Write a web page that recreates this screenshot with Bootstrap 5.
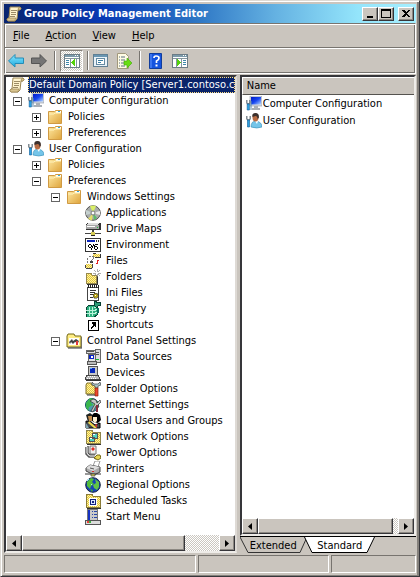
<!DOCTYPE html>
<html lang="en">
<head>
<meta charset="utf-8">
<meta name="viewport" content="width=device-width, initial-scale=1">
<title>Group Policy Management Editor</title>
<link href="https://cdn.jsdelivr.net/npm/bootstrap@5.3.0/dist/css/bootstrap.min.css" rel="stylesheet">
<style>
:root{--face:#cac5be;--dark:#77746f;--ink:#36363a}
body{font:11px/16px Tahoma,"DejaVu Sans Condensed","Noto Sans",sans-serif;color:#000;background:var(--face)}
button{font:inherit;color:inherit;background:none;border:0;padding:0}
.window{min-height:100vh;padding:1px 2px 1px 1px;border:1px solid;border-color:#dedad4 var(--ink) var(--ink) #dedad4;box-shadow:inset 1px 1px #fff,inset -2px -1px #85817c}
.window-inner{padding:2px 1px 2px 2px}
.titlebar{height:19px;padding:0 2px 0 2px;background:linear-gradient(90deg,#08246f 0,#0739b4 24%,#2e77c5 47%,#65b2e2 66%,#94e5fb 86%,#a5efff 100%)}
.titlebar h1{font:bold 11px/18px Tahoma,"DejaVu Sans Condensed","Noto Sans",sans-serif;color:#fff;margin:0 0 0 2px}
.raised{background:var(--face);border:1px solid;border-color:#fff var(--ink) var(--ink) #fff;box-shadow:inset -1px -1px #8c8882}
.caption-btn{width:16px;height:14px}
.caption-btn svg,.arrow-btn svg{display:block;margin:auto}
.bars{border:1px solid;border-color:var(--dark) #fff #fff var(--dark);box-shadow:inset 1px 1px #fff,inset -1px -1px var(--dark)}
.menu-row{height:24px;padding-left:8px;border-bottom:1px solid var(--dark)}
.menu-row button{line-height:22px}
.tool-row{height:25px;padding:1px 3px 2px 3px;border-top:1px solid #fff}
.tool{width:23px;height:22px}
.dither{background:repeating-conic-gradient(#fff 0 25%,#cbc7c0 0 50%) 0 0/2px 2px}
.tool.pressed{border:1px solid;border-color:#85817b #fff #fff #85817b}
.divider{width:2px;height:19px;border-left:1px solid var(--dark);border-right:1px solid #fff}
.icon{width:16px;height:16px;flex:none;display:block}
.panes{gap:3px;margin-top:1px}
.pane{background:#fff;border:2px solid;border-color:var(--ink) #eeece8 #eeece8 var(--ink)}
.pane-left{flex:231 1 0;min-width:0;border-right-color:#dedad5}
.pane-right{flex:178 1 0;min-width:0}
.tree ul,.tree{list-style:none;margin:0;padding:0}
.tree ul ul{padding-left:19px}
.node{display:flex;align-items:center;height:16px;white-space:nowrap;padding-left:7px}
.node .icon{margin-left:6px;margin-right:5px}
.leaf{padding-left:16px}
.root{padding-left:3px}
.root .icon{margin:0 3px 0 0}
.root .name{flex:1;min-width:0;overflow:hidden;background:#0a246a;color:#fff;outline:1px dotted #ffdf83;outline-offset:-1px;padding-left:1px}
.toggle{width:9px;height:9px;border:1px solid #666;background:linear-gradient(#000,#000) center/5px 1px no-repeat #fff;flex:none}
.toggle.plus{background:linear-gradient(#000,#000) center/5px 1px no-repeat,linear-gradient(#000,#000) center/1px 5px no-repeat,#fff}
.scroll{height:16px}
.arrow-btn{width:16px;flex:none}
.thumb{flex:160 1 0}.left-rest{flex:33 1 0}
.right-thumb{flex:136 1 0}.right-rest{flex:5 1 0}
.items{width:100%;border-collapse:separate;border-spacing:0}
.items th{height:18px;font-weight:400;background:var(--face);border:solid;border-width:1px 0 1px 1px;border-color:#fff #fff #55534f #fff;padding:0 0 0 4px}
.items td{height:17px;padding:0 0 0 4px}
.items .icon{margin-right:1px}
.tabs{height:17px;border-top:1px solid #000}
.tabs button{position:relative;height:16px;line-height:15px;width:67px}
.tabs button+button{width:72px;margin-left:-3px}
.tabs svg{position:absolute;inset:0;width:100%;height:100%}
.tabs span{position:relative}
.status{height:18px;margin-top:2px}
.status div{border:1px solid;border-color:var(--dark) #fff #fff var(--dark)}
.status{gap:2px}
.s1{flex:193 1 0}.s2{flex:131 1 0}.s3{flex:84 1 0}
</style>
<script src="https://cdn.jsdelivr.net/npm/bootstrap@5.3.0/dist/js/bootstrap.bundle.min.js"></script>
</head>
<body>
<svg width="0" height="0" class="position-absolute" aria-hidden="true">
<defs>
<linearGradient id="gold" x2="1" y2="1"><stop stop-color="#ffe9a2"/><stop offset="1" stop-color="#dea43c"/></linearGradient>
<linearGradient id="screen" x2="1" y2="1"><stop stop-color="#0018c8"/><stop offset=".5" stop-color="#1746f0"/><stop offset="1" stop-color="#b5d8ff"/></linearGradient>
<linearGradient id="cyan" x2="0" y2="1"><stop stop-color="#8be7ff"/><stop offset="1" stop-color="#1ba9df"/></linearGradient>
<pattern id="yd" width="2" height="2" patternUnits="userSpaceOnUse"><path fill="#fff3a0" d="M0 0h2v2H0z"/><path fill="#e2c43a" d="M0 0h1v1H0zM1 1h1v1H1z"/></pattern>
</defs>
<symbol id="scroll" viewBox="0 0 16 16"><path d="M4 1h10q2 1 0 3h-2l-1 9-2 2H2q-2-1 0-3h1z" fill="#fff3cc" stroke="#9b8654"/><path d="M5 4.500h6M5 6.500h5M5 8.500h5M4 10.500h5" stroke="#9c8b66"/><path d="M12 4q0-3 2-3 2 2 0 3zM2 12h8q-1 2-1 3H2q-2-1 0-3z" fill="#d9c590" stroke="#8d7745" stroke-width=".6"/></symbol>
<symbol id="computer" viewBox="0 0 16 16"><path d="M4 0h12v10H4z" fill="#d6dbe2" stroke="#8e99a5" stroke-width=".6"/><path d="M5 1h10v7.500H5z" fill="url(#screen)"/><path d="M8 10h4v2h2v2H6v-2h2z" fill="#a9afb6"/><path d="M.8 4v3l1.400 1.500L3.800 7V4" fill="none" stroke="#707b86" stroke-width="1.300"/><path d="M1.200 8h2.200v6H1.200z" fill="#2ca6e5" stroke="#0e5b9c" stroke-width=".6"/><path d="M4.500 5h1v9h-1z" fill="#5d8aac"/></symbol>
<symbol id="user" viewBox="0 0 16 16"><path d="M5 14q0-6 5-6 6 1 6 6-5 2-11 0z" fill="#75c5e9" stroke="#318bb6" stroke-width=".6"/><path d="M9 8l2 3 1-3z" fill="#fff"/><ellipse cx="9.500" cy="4.500" rx="3" ry="4" fill="#b86b43"/><path d="M6.500 4q-1-4 3-4 4 0 3.300 5l-1.300 1q0-3-2-3z" fill="#3b302d"/><path d="M.8 3v3L2.500 7.500 4.200 6V3" fill="none" stroke="#6f7981" stroke-width="1.300"/><path d="M1.500 7h2v7h-2z" fill="#2b9fe0" stroke="#0b5c99" stroke-width=".6"/></symbol>
<symbol id="folder" viewBox="0 0 16 16"><path d="M1.500 2.500h6l1-1h6v13h-13z" fill="url(#gold)" stroke="#d09a43"/><path d="M9 2h5v2H9z" fill="#fff"/><path d="M11 2h2v1h-2z" fill="#36a8d8"/><path d="M2 5h5l1-1h6" stroke="#fff2b9" fill="none"/></symbol>
<symbol id="cd" viewBox="0 0 16 16"><circle cx="8" cy="8" r="7.300" fill="#a9adaa" stroke="#555"/><path d="M8 8L5 1q3-1 6 0z" fill="#d9ef65"/><path d="M8 8l-5 6 4 1.500z" fill="#e4df67"/><path d="M8 8l7-2v4z" fill="#e8e8e8"/><path d="M8 8l1 7 3-2z" fill="#5abc69"/><path d="M8 8L1 5v5z" fill="#c4d0cf"/><circle cx="8" cy="8" r="2" fill="#fff" stroke="#777"/></symbol>
<symbol id="drive" viewBox="0 0 16 16" shape-rendering="crispEdges"><path d="M2 2h13l1 1v6H1V4z" fill="#333"/><path d="M3 2h11l-1 2H1z" fill="#ddd"/><path d="M1 4h13v4H1z" fill="#a6a6a6"/><path d="M2 5h8v1H2z" fill="#fff"/><path d="M12 6h1v1h-1z" fill="#1bc03b"/><path d="M7 9h2v3H7zM0 12h16v1H0z" fill="#444"/><path d="M6 11h4v3H6z" fill="#d6cc55"/><path d="M6 14h4v1H6z" fill="#222"/></symbol>
<symbol id="env" viewBox="0 0 16 16" shape-rendering="crispEdges"><path d="M0 1h16v14H0z" fill="#333"/><path d="M1 2h14v12H1z" fill="#fff"/><path d="M2 3h8v2H2z" fill="#0a24ba"/><path d="M11 3h1v2h-1zM13 3h1v2h-1z" fill="#333"/><path d="M4 7h2v1H4zM3 8h1v2H3zM6 8h1v2H6zM4 10h2v1H4zM8 7h1v2H8zM7 9h1v2H7zM6 11h1v2H6zM10 7h3v1h-3zM9 8h1v4H9zM10 9h2v1h-2zM12 10h1v2h-1zM10 12h2v1h-2z"/></symbol>
<symbol id="files" viewBox="0 0 16 16" shape-rendering="crispEdges"><path d="M8 1h7v3H8z" fill="url(#yd)"/><path d="M8 0h3v1H8zM15 1h1v3h-1zM10 4h6v1h-6z" fill="#333"/><path d="M5 3L2 7v4h2l4-5 1-3z" fill="#fff" stroke="#777" stroke-dasharray="2 1"/><path d="M1 11h6v4H1z" fill="url(#yd)"/><path d="M0 12h1v3H0zM1 15h6v1H1zM7 11h1v4H7zM5 8h3v2H5z" fill="#444"/><path d="M12 7h2v1h-1v3h-2v-1h1z" fill="#e02020"/></symbol>
<symbol id="newfolder" viewBox="0 0 16 16" shape-rendering="crispEdges"><path d="M1 6l1-2h4l1 2h4v8H1z" fill="url(#yd)" stroke="#96884d"/><path d="M2 15h10V7h1v9H2z" fill="#333"/><path d="M12 0v8M8 4h8M9 1l6 6M15 1L9 7" stroke="#777" stroke-width=".6"/><path d="M11 3h2v2h-2z" fill="#fff"/></symbol>
<symbol id="ini" viewBox="0 0 16 16" shape-rendering="crispEdges"><path d="M2.500 2.500h11v13h-11z" fill="#fff" stroke="#444"/><path d="M3 0h1v3H3zM5 0h1v3H5zM7 0h1v3H7zM9 0h1v3H9zM11 0h1v3h-1zM13 0h1v3h-1z" fill="#222"/><path d="M5 5.500h6M5 7.500h5M5 9.500h3M5 12.500h3" stroke="#333"/><path d="M9 8h3v1h1v3h-1v1H9v-1H8V9h1z" fill="#b4a11c" stroke="#333" stroke-width=".5"/><path d="M10 10h1v1h-1z" fill="#fff"/></symbol>
<symbol id="registry" viewBox="0 0 16 16" shape-rendering="crispEdges"><path d="M1 7l3-3h5l3 2v8l-3 2H1z" fill="#2caf7d" stroke="#073f32"/><path d="M1 9h8M1 12h8M4 6v9M7 6v9M9 7l3-2M9 10l3-2M9 13l3-2" stroke="#b9f3db"/><path d="M9 1l2-1 1 2 3-1 1 3-3 1-1 2-3-3z" fill="#2b9b76" stroke="#063e30"/><path d="M12 7h2v4l-2 3z" fill="#08715a"/></symbol>
<symbol id="shortcut" viewBox="0 0 16 16" shape-rendering="crispEdges"><path d="M3 3h11v11H3z"/><path d="M4 4h9v9H4z" fill="#fff"/><path d="M7 5h4v5h-1V9H9v1H8v1H7v1H6v-2h1V9h1V7H7z"/></symbol>
<symbol id="control" viewBox="0 0 16 16"><path d="M1 3l1-2h6l1 2h6v11H1z" fill="#ffed83" stroke="#746817"/><path d="M3 5h10v7H3z" fill="#fff"/><path d="M3 9l3-3 1 2 3-2 3 2-1 2-3-1-2 2-2-2-1 2z" fill="#444"/><path d="M10 8h2v4h-2z" fill="#df3939"/><path d="M2 15h14V4" fill="none" stroke="#333"/></symbol>
<symbol id="data" viewBox="0 0 16 16" shape-rendering="crispEdges"><path d="M1 1h9v3H1zM10 0h5v13h-5z" fill="#ddd" stroke="#666"/><path d="M2 2.500h7M11 3.500h3M11 5.500h3" stroke="#555"/><path d="M3 5h7v7H3z" fill="#e5e5e5" stroke="#666"/><path d="M4 6h5v4H4z" fill="#0b24c8"/><path d="M6 7h2v2H6z" fill="#fff"/><path d="M2 12h9v3H2z" fill="#bbb" stroke="#555"/><path d="M11 10h3v1h-3z" fill="#1abe33"/></symbol>
<symbol id="device" viewBox="0 0 16 16" shape-rendering="crispEdges"><path d="M3 1h9v9H3z" fill="#c9c9c9" stroke="#555"/><path d="M5 3h5v5H5z" fill="#0828bc"/><path d="M5 3h2v1H5z" fill="#54a7ff"/><path d="M2 10h11l2 4H0z" fill="#bdbdbd" stroke="#444"/><path d="M3 11.500h8M2 13.500h9" stroke="#fff" stroke-dasharray="1 1"/><path d="M1 15h15v-4" fill="none" stroke="#333"/></symbol>
<symbol id="folderopt" viewBox="0 0 16 16"><path d="M1 4l1-2h4l1 2h5v9H1z" fill="url(#yd)" stroke="#80702a"/><path d="M2 14h10V6" fill="none" stroke="#333"/><path d="M7 1l2 2h4l2-2 1 3-3 1v2h-3V5L7 4z" fill="#a6c3c6" stroke="#444" stroke-width=".7"/><path d="M10 7h3v8h-3z" fill="#ef492c" stroke="#88200e" stroke-width=".7"/></symbol>
<symbol id="internet" viewBox="0 0 16 16"><circle cx="7" cy="8" r="6.500" fill="#4e9aaf" stroke="#165068"/><path d="M1 6l4-5 4 1-3 4 2 2-4 2-1 4-2-4z" fill="#39b64d"/><path d="M9 3l4 2-3 6-2-3z" fill="#6ed35f"/><path d="M5 4l3-2 3 1 1 3 3-3 1 2-3 3 1 2-3-1-3 6-2-1 4-7z" fill="#c6c6c6" stroke="#333" stroke-width=".7"/><path d="M11 8h2v7h-2z" fill="#882c3c"/></symbol>
<symbol id="group" viewBox="0 0 16 16"><path d="M1 2l4-2 4 3-1 5-5 1z" fill="#202320"/><path d="M3 3h4v5H4z" fill="#c38b4b"/><path d="M7 3q1-4 5-3l3 2 1 5-3 3-5-1z"/><path d="M8 4h4v4l-2 2-2-2z" fill="#fff0ce"/><path d="M1 8l5 1 4 3 5-2v5H1z" fill="#464d52" stroke="#000"/><path d="M3 10l6 5h3l-8-7z" fill="#f1d94b"/><path d="M10 12l2-1v4z" fill="#d8312b"/><path d="M1 10l3 5H1z" fill="#80a7b4"/></symbol>
<symbol id="network" viewBox="0 0 16 16" shape-rendering="crispEdges"><path d="M1 3l1-2h5l1 2h7v11H1z" fill="url(#yd)" stroke="#8e844b"/><path d="M2 15h14V4" fill="none" stroke="#333"/><path d="M7 4h5v5H7zM4 8h5v4H4z" fill="#4ed1c2" stroke="#555"/><path d="M8 5.500h2M5 9.500h2" stroke="#fff"/></symbol>
<symbol id="power" viewBox="0 0 16 16"><path d="M5 1h6v8H5z" fill="#eee" stroke="#777"/><path d="M7 3h2v2H7z" fill="#e12c25"/><path d="M8 2v4M6 4h4" stroke="#e12c25"/><path d="M1 2v7l3 3h5l2 2M3 1v7l2 2h5" fill="none" stroke="#555" stroke-width="1.500"/><path d="M2 2v6l3 3h5" fill="none" stroke="#ddd"/><path d="M9 13l3-3h3l1 3-3 2z" fill="#e5d452" stroke="#746819"/></symbol>
<symbol id="printer" viewBox="0 0 16 16"><path d="M8 5l2-5h5l-2 6z" fill="#fff" stroke="#999"/><path d="M1 7l4-3 10 2v5l-6 3-8-4z" fill="#aaa" stroke="#444"/><path d="M1 7l7 3 7-4-10-2z" fill="#ddd"/><path d="M5 7l4 1" stroke="#555"/><path d="M7 10h2v1H7z" fill="#d62d2d"/><path d="M0 13h16" stroke="#333"/><path d="M6 13h4v2H6z" fill="#d6cf4b" stroke="#444" stroke-width=".7"/></symbol>
<symbol id="globe" viewBox="0 0 16 16"><circle cx="8" cy="8" r="7.300" fill="#1743b6" stroke="#15243d"/><path d="M2 5l4-4 3 1-2 3 2 2-3 2-1 3-3-3z" fill="#54bd3b"/><path d="M10 2l4 3v5l-2 3-3-2-1-3 3-2z" fill="#62c347"/><path d="M5 12l3 1-1 2z" fill="#43ab36"/><path d="M2 4l2-2M6 8l1-1" stroke="#9deaff"/></symbol>
<symbol id="schedule" viewBox="0 0 16 16" shape-rendering="crispEdges"><path d="M1 3l1-2h5l1 2h7v11H1z" fill="url(#yd)" stroke="#8a7b38"/><path d="M2 15h14V4" fill="none" stroke="#333"/><path d="M4 5h8v8H4z" fill="#fff"/><path d="M5 6h6v6H5z" fill="#15247e"/><path d="M6 7h4v4H6z" fill="#dce8ff"/><path d="M7 8h2v2H7z" fill="#15247e"/></symbol>
<symbol id="start" viewBox="0 0 16 16" shape-rendering="crispEdges"><path d="M2 0h11v13H2z" fill="#777"/><path d="M3 1h9v10H3z" fill="#c9c9c9"/><path d="M3 1h2v10H3z" fill="#1632c2"/><path d="M7 2.500h1M9 2.500h3M7 5.500h1M9 5.500h3M7 8.500h1M9 8.500h3" stroke="#2545a9"/><path d="M0 11h15v4H0z" fill="#ddd" stroke="#555"/><path d="M2 12h2v2H2z" fill="#e83c38"/><path d="M4 12h2v2H4z" fill="#3bb540"/></symbol>
<symbol id="panel" viewBox="0 0 16 16" shape-rendering="crispEdges"><path d="M.5 1.500h15v13H.5z" fill="#fff" stroke="#6c7c85"/><path d="M1 2h14v2H1z" fill="#7c9aaa"/><path d="M11 2h1v1h-1zM13 2h1v1h-1z" fill="#fff"/><path d="M1 5.500h14M6.500 5v9M12.500 5v9" stroke="#83959d"/><path d="M2 7.500h3M2 9.500h3M2 11.500h3" stroke="#3e88aa"/><path d="M11 6v7L7 9.500z" fill="#55d10b"/></symbol>
<symbol id="panelr" viewBox="0 0 16 16" shape-rendering="crispEdges"><path d="M.5 1.500h15v13H.5z" fill="#fff" stroke="#6c7c85"/><path d="M1 2h14v2H1z" fill="#7c9aaa"/><path d="M11 2h1v1h-1zM13 2h1v1h-1z" fill="#fff"/><path d="M1 5.500h14M4.500 5v9M9.500 5v9" stroke="#83959d"/><path d="M11 7.500h3M11 9.500h3M11 11.500h3" stroke="#3e88aa"/><path d="M5 6v7l4-3.500z" fill="#55d10b"/></symbol>
</svg>

<div class="window d-flex flex-column">
<div class="window-inner d-flex flex-column flex-grow-1">
<header class="titlebar d-flex align-items-center">
<svg class="icon"><use href="#scroll"/></svg>
<h1 class="text-nowrap">Group Policy Management Editor</h1>
<div class="d-flex ms-auto">
<button class="raised caption-btn" aria-label="Minimize"><svg width="12" height="11"><path d="M3 8h6v2H3z"/></svg></button>
<button class="raised caption-btn" aria-label="Maximize"><svg width="12" height="11" shape-rendering="crispEdges"><path fill-rule="evenodd" d="M1 1h10v9H1zM2 3v6h8V3z"/></svg></button>
<button class="raised caption-btn ms-1" aria-label="Close"><svg width="12" height="11" shape-rendering="crispEdges"><path d="M2 2h2l2 2 2-2h2v1L7 5.500 10 8v1H8L6 7 4 9H2V8l3-2.500L2 3z"/></svg></button>
</div>
</header>

<div class="bars">
<nav class="menu-row d-flex align-items-center" aria-label="Menu">
<button><u>F</u>ile</button><button class="ms-3"><u>A</u>ction</button><button class="ms-3"><u>V</u>iew</button><button class="ms-3"><u>H</u>elp</button>
</nav>
<div class="tool-row d-flex align-items-center" role="toolbar" aria-label="Tools">
<button class="tool" aria-label="Back"><svg class="icon"><path d="M.5 8L7 1.500V5h8.500v5.500H7V14z" fill="url(#cyan)" stroke="#258cb6"/></svg></button>
<button class="tool" aria-label="Forward"><svg class="icon"><path d="M15.500 8L9 1.500V5H.5v5.500H9V14z" fill="#757575" stroke="#555"/></svg></button>
<div class="divider me-1"></div>
<button class="tool pressed dither d-flex align-items-center justify-content-center" aria-label="Show or hide console tree"><svg class="icon"><use href="#panel"/></svg></button>
<div class="divider ms-1 me-1"></div>
<button class="tool d-flex align-items-center" aria-label="Properties"><svg class="icon" shape-rendering="crispEdges"><path d="M.5 1.500h14v12H.5z" fill="#e9f2f8" stroke="#607f93"/><path d="M1 2h13v2H1z" fill="#6996b2"/><path d="M3.500 5.500h8v6h-8z" fill="#fff" stroke="#658ba3"/><path d="M5 7.500h5M5 9.500h3" stroke="#397da2"/></svg></button>
<button class="tool d-flex align-items-center" aria-label="Export list"><svg class="icon"><path d="M1.500.5h8l3 3v12h-11z" fill="#fffbe4" stroke="#a1987c"/><path d="M3 4h1m1 0h4M3 7h1m1 0h4M3 10h1m1 0h4M3 13h1m1 0h4" stroke="#596f82"/><path d="M8 8h3V5l5 5-5 5v-3H8z" fill="#68dd13" stroke="#42a90a" stroke-width=".6"/></svg></button>
<div class="divider me-1"></div>
<button class="tool d-flex align-items-center ms-1" aria-label="Help"><svg class="icon"><path d="M.5.500h12v15H.5z" fill="#1554df" stroke="#113d9c"/><path d="M2 1v14" stroke="#6295ff"/><path d="M5 5q0-2 2-2 3 0 3 2 0 2-2.500 3v2" fill="none" stroke="#fff" stroke-width="1.700"/><path d="M6.500 11.500h2v2h-2z" fill="#fff"/></svg></button>
<button class="tool d-flex align-items-center" aria-label="Show or hide action pane"><svg class="icon"><use href="#panelr"/></svg></button>
</div>
</div>

<main class="panes d-flex flex-grow-1">
<section class="pane pane-left d-flex flex-column" aria-label="Console tree">
<div class="tree flex-grow-1">
<div class="node root"><svg class="icon"><use href="#scroll"/></svg><span class="name">Default Domain Policy [Server1.contoso.co</span></div>
<ul>
<li><div class="node"><button class="toggle" aria-label="Collapse Computer Configuration"></button><svg class="icon"><use href="#computer"/></svg>Computer Configuration</div>
<ul>
<li class="node"><button class="toggle plus" aria-label="Expand Policies"></button><svg class="icon"><use href="#folder"/></svg>Policies</li>
<li class="node"><button class="toggle plus" aria-label="Expand Preferences"></button><svg class="icon"><use href="#folder"/></svg>Preferences</li>
</ul></li>
<li><div class="node"><button class="toggle" aria-label="Collapse User Configuration"></button><svg class="icon"><use href="#user"/></svg>User Configuration</div>
<ul>
<li class="node"><button class="toggle plus" aria-label="Expand Policies"></button><svg class="icon"><use href="#folder"/></svg>Policies</li>
<li><div class="node"><button class="toggle" aria-label="Collapse Preferences"></button><svg class="icon"><use href="#folder"/></svg>Preferences</div>
<ul>
<li><div class="node"><button class="toggle" aria-label="Collapse Windows Settings"></button><svg class="icon"><use href="#folder"/></svg>Windows Settings</div>
<ul>
<li class="node leaf"><svg class="icon"><use href="#cd"/></svg>Applications</li>
<li class="node leaf"><svg class="icon"><use href="#drive"/></svg>Drive Maps</li>
<li class="node leaf"><svg class="icon"><use href="#env"/></svg>Environment</li>
<li class="node leaf"><svg class="icon"><use href="#files"/></svg>Files</li>
<li class="node leaf"><svg class="icon"><use href="#newfolder"/></svg>Folders</li>
<li class="node leaf"><svg class="icon"><use href="#ini"/></svg>Ini Files</li>
<li class="node leaf"><svg class="icon"><use href="#registry"/></svg>Registry</li>
<li class="node leaf"><svg class="icon"><use href="#shortcut"/></svg>Shortcuts</li>
</ul></li>
<li><div class="node"><button class="toggle" aria-label="Collapse Control Panel Settings"></button><svg class="icon"><use href="#control"/></svg>Control Panel Settings</div>
<ul>
<li class="node leaf"><svg class="icon"><use href="#data"/></svg>Data Sources</li>
<li class="node leaf"><svg class="icon"><use href="#device"/></svg>Devices</li>
<li class="node leaf"><svg class="icon"><use href="#folderopt"/></svg>Folder Options</li>
<li class="node leaf"><svg class="icon"><use href="#internet"/></svg>Internet Settings</li>
<li class="node leaf"><svg class="icon"><use href="#group"/></svg>Local Users and Groups</li>
<li class="node leaf"><svg class="icon"><use href="#network"/></svg>Network Options</li>
<li class="node leaf"><svg class="icon"><use href="#power"/></svg>Power Options</li>
<li class="node leaf"><svg class="icon"><use href="#printer"/></svg>Printers</li>
<li class="node leaf"><svg class="icon"><use href="#globe"/></svg>Regional Options</li>
<li class="node leaf"><svg class="icon"><use href="#schedule"/></svg>Scheduled Tasks</li>
<li class="node leaf"><svg class="icon"><use href="#start"/></svg>Start Menu</li>
</ul></li>
</ul></li>
</ul></li>
</ul>
</div>
<div class="scroll dither d-flex">
<button class="raised arrow-btn" aria-label="Scroll left"><svg width="8" height="9"><path d="M6 1v7L2 4.500z"/></svg></button>
<div class="raised thumb"></div><div class="left-rest"></div>
<button class="raised arrow-btn" aria-label="Scroll right"><svg width="8" height="9"><path d="M2 1v7l4-3.500z"/></svg></button>
</div>
</section>

<div class="pane-right d-flex flex-column">
<section class="pane flex-grow-1 d-flex flex-column" aria-label="Details">
<div class="flex-grow-1">
<table class="items">
<thead><tr><th scope="col">Name</th></tr></thead>
<tbody>
<tr><td><div class="d-flex"><svg class="icon"><use href="#computer"/></svg>Computer Configuration</div></td></tr>
<tr><td><div class="d-flex"><svg class="icon"><use href="#user"/></svg>User Configuration</div></td></tr>
</tbody>
</table>
</div>
<div class="scroll dither d-flex">
<button class="raised arrow-btn" aria-label="Scroll left"><svg width="8" height="9"><path d="M6 1v7L2 4.500z"/></svg></button>
<div class="raised right-thumb"></div><div class="right-rest"></div>
<button class="raised arrow-btn" aria-label="Scroll right"><svg width="8" height="9"><path d="M2 1v7l4-3.500z"/></svg></button>
</div>
</section>
<div class="tabs d-flex" role="tablist">
<button role="tab" aria-selected="false"><svg viewBox="0 0 67 16" preserveAspectRatio="none"><path d="M0 0l8 15.500h52L67 0" fill="#cac5be" stroke="#333"/></svg><span>Extended</span></button>
<button role="tab" aria-selected="true"><svg viewBox="0 0 72 16" preserveAspectRatio="none"><path d="M0-1l8 16.500h55L71-1" fill="#fff" stroke="#000"/></svg><span>Standard</span></button>
</div>
</div>
</main>

<footer class="status d-flex" aria-label="Status bar"><div class="s1"></div><div class="s2"></div><div class="s3"></div></footer>
</div>
</div>
</body>
</html>
